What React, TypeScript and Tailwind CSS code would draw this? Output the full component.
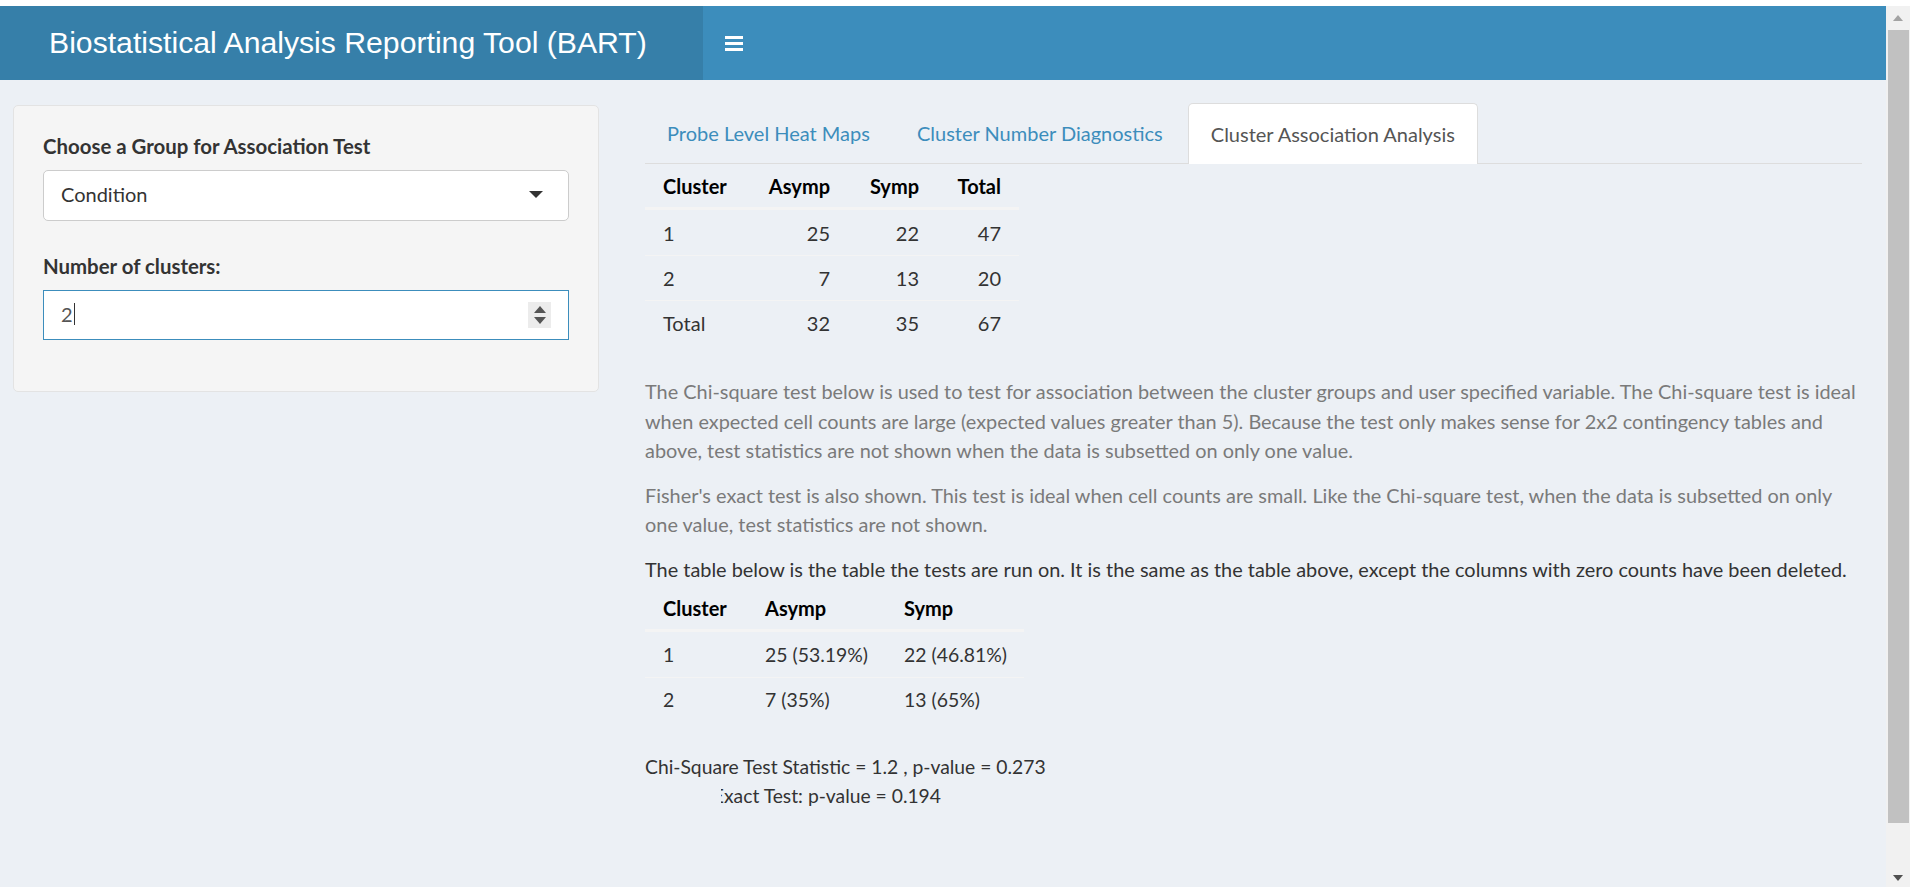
import React from 'react';

const countRows = [
  ['1', '25', '22', '47'],
  ['2', '7', '13', '20'],
  ['Total', '32', '35', '67'],
];

const pctRows = [
  ['1', '25 (53.19%)', '22 (46.81%)'],
  ['2', '7 (35%)', '13 (65%)'],
];

const Hamburger = () => (
  <div className="flex flex-col gap-[3px]">
    <span className="block w-[18px] h-[3px] bg-white"></span>
    <span className="block w-[18px] h-[3px] bg-white"></span>
    <span className="block w-[18px] h-[3px] bg-white"></span>
  </div>
);

const Scrollbar = () => (
  <div className="w-[24px] shrink-0 bg-[#f1f1f1] flex flex-col items-center">
    <div className="h-[24px] w-full flex items-center justify-center">
      <svg width="10" height="6" viewBox="0 0 10 6"><path d="M5 0 L10 6 L0 6 Z" fill="#a3a3a3" /></svg>
    </div>
    <div className="w-[21px] h-[793px] bg-[#c1c1c1]"></div>
    <div className="flex-1 w-full flex items-end justify-center pb-[6px]">
      <svg width="10" height="6" viewBox="0 0 10 6"><path d="M0 0 L10 0 L5 6 Z" fill="#505050" /></svg>
    </div>
  </div>
);

const Sidebar = () => (
  <aside className="w-[599px] shrink-0 pl-[13px] pt-[25px]">
    <div className="h-[287px] bg-[#f5f5f5] border border-[#e3e3e3] rounded-[5px] px-[29px] pt-[26px]">
      <div className="h-[29px] leading-[29px] font-bold text-[20.4px] text-[#333]">Choose a Group for Association Test</div>
      <div className="mt-[9px] h-[51px] bg-white border border-[#cccccc] rounded-[5px] flex items-center justify-between pl-[17px] pr-[25px] pb-[3px]">
        <span className="text-[#333]">Condition</span>
        <svg width="14" height="7" viewBox="0 0 14 7"><path d="M0 0 L14 0 L7 7 Z" fill="#333" /></svg>
      </div>
      <div className="mt-[31px] h-[29px] leading-[29px] font-bold text-[20.4px] text-[#333]">Number of clusters:</div>
      <div className="mt-[9px] h-[50px] bg-white border border-[#3c8dbc] flex items-center justify-between pl-[17px] pr-[17px]">
        <span className="flex items-center text-[#555] pb-[2px]">
          2<span className="ml-[1px] w-px h-[22px] bg-[#333]"></span>
        </span>
        <div className="w-[23px] h-[26px] bg-[#ececec] flex flex-col items-center justify-center gap-[4px]">
          <svg width="12" height="7" viewBox="0 0 12 7"><path d="M6 0 L12 7 L0 7 Z" fill="#555" /></svg>
          <svg width="12" height="7" viewBox="0 0 12 7"><path d="M0 0 L12 0 L6 7 Z" fill="#555" /></svg>
        </div>
      </div>
    </div>
  </aside>
);

const Tabs = () => (
  <ul className="flex h-[61px] border-b border-[#dddddd]">
    <li className="mr-[3px] h-[60px] px-[22px] flex items-center text-[#3c8dbc]">Probe Level Heat Maps</li>
    <li className="mr-[3px] h-[60px] px-[22px] flex items-center text-[#3c8dbc]">Cluster Number Diagnostics</li>
    <li className="h-[61px] px-[22px] flex items-center bg-white border border-b-0 border-[#dddddd] rounded-t-[5px] text-[#555]">
      Cluster Association Analysis
    </li>
  </ul>
);

const CountTable = () => (
  <div className="w-[374px]">
    <div className="grid grid-cols-[104px_99px_89px_82px] h-[46px] border-b-[3px] border-[#f4f4f4] font-bold text-black">
      <div className="px-[18px] flex items-center">Cluster</div>
      <div className="px-[18px] flex items-center justify-end">Asymp</div>
      <div className="px-[18px] flex items-center justify-end">Symp</div>
      <div className="px-[18px] flex items-center justify-end">Total</div>
    </div>
    {countRows.map((r, i) => (
      <div
        key={r[0]}
        className={i === 0 ? 'grid grid-cols-[104px_99px_89px_82px] h-[45px]' : 'grid grid-cols-[104px_99px_89px_82px] h-[45px] border-t border-[#f4f4f4]'}
      >
        <div className="px-[18px] flex items-center">{r[0]}</div>
        <div className="px-[18px] flex items-center justify-end">{r[1]}</div>
        <div className="px-[18px] flex items-center justify-end">{r[2]}</div>
        <div className="px-[18px] flex items-center justify-end">{r[3]}</div>
      </div>
    ))}
  </div>
);

const PercentTable = () => (
  <div className="w-[379px] mt-[2px] whitespace-nowrap">
    <div className="grid grid-cols-[102px_139px_138px] h-[46px] border-b-[3px] border-[#f4f4f4] font-bold text-black">
      <div className="px-[18px] flex items-center">Cluster</div>
      <div className="px-[18px] flex items-center">Asymp</div>
      <div className="px-[18px] flex items-center">Symp</div>
    </div>
    {pctRows.map((r, i) => (
      <div
        key={r[0]}
        className={i === 0 ? 'grid grid-cols-[102px_139px_138px] h-[45px] text-[19.4px]' : 'grid grid-cols-[102px_139px_138px] h-[45px] border-t border-[#f4f4f4] text-[19.4px]'}
      >
        <div className="px-[18px] flex items-center">{r[0]}</div>
        <div className="px-[18px] flex items-center">{r[1]}</div>
        <div className="px-[18px] flex items-center">{r[2]}</div>
      </div>
    ))}
  </div>
);

export default function App() {
  return (
    <div className="h-screen w-full overflow-hidden bg-white pt-[6px] pb-[7px] pr-[6px] flex font-[Lato,sans-serif] text-[20px] text-[#333]">
      <div className="flex-1 min-w-0 flex flex-col bg-[#ecf0f5]">
        <header className="h-[74px] shrink-0 flex">
          <div className="w-[703px] bg-[#367fa9] flex items-center pl-[49px] text-white text-[30.2px] font-['Liberation_Sans',Arial,sans-serif]">
            Biostatistical Analysis Reporting Tool (BART)
          </div>
          <div className="flex-1 bg-[#3c8dbc] flex items-center pl-[22px]">
            <Hamburger />
          </div>
        </header>

        <div className="flex-1 flex">
          <Sidebar />

          <main className="flex-1 min-w-0 pl-[46px] pr-[24px] pt-[23px]">
            <Tabs />
            <CountTable />

            <p className="mt-[32px] leading-[29.5px] text-[19.9px] text-[#7a7a7a] whitespace-nowrap">
              The Chi-square test below is used to test for association between the cluster groups and user specified variable. The Chi-square test is ideal
              <br />
              when expected cell counts are large (expected values greater than 5). Because the test only makes sense for 2x2 contingency tables and
              <br />
              above, test statistics are not shown when the data is subsetted on only one value.
            </p>
            <p className="mt-[15px] leading-[29.5px] text-[19.9px] text-[#7a7a7a] whitespace-nowrap">
              Fisher's exact test is also shown. This test is ideal when cell counts are small. Like the Chi-square test, when the data is subsetted on only
              <br />
              one value, test statistics are not shown.
            </p>
            <p className="mt-[15px] leading-[29.5px] text-[19.9px] text-[#333] whitespace-nowrap">
              The table below is the table the tests are run on. It is the same as the table above, except the columns with zero counts have been deleted.
            </p>

            <PercentTable />

            <div className="mt-[30px] leading-[29px] text-[19.3px] text-[#333]">
              <div>Chi-Square Test Statistic = 1.2 , p-value = 0.273</div>
              <div dir="rtl" className="ml-[76px] w-[220px] overflow-hidden whitespace-nowrap">
                <span dir="ltr">Fisher's Exact Test: p-value = 0.194</span>
              </div>
            </div>
          </main>
        </div>
      </div>
      <Scrollbar />
    </div>
  );
}
